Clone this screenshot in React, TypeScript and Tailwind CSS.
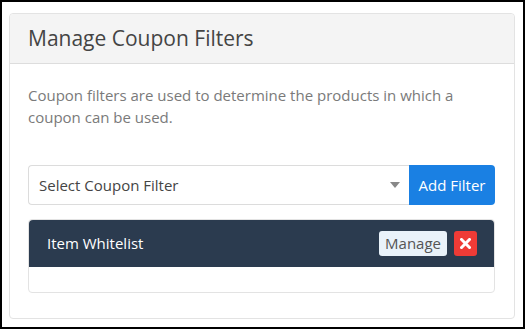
import { useState } from "react";

const filters = ["Item Whitelist"];

export default function App() {
  const [selected, setSelected] = useState("");

  return (
    <div
      className="w-[525px] h-[329px] border-2 border-black bg-white pt-[11px] pl-[7px] pr-[8px]"
      style={{ fontFamily: '"Open Sans", "Noto Sans", sans-serif' }}
    >
      <div className="h-[306px] rounded border border-[#e3e3e3] flex flex-col">
        <div className="h-[50px] bg-[#f4f4f4] border-b border-[#dddddd] rounded-t flex items-center px-[18px]">
          <h1 className="text-[21px] text-[#444444] leading-none">Manage Coupon Filters</h1>
        </div>

        <div className="pl-[18px] pr-[19px] pt-[20px]">
          <p className="text-[15px] leading-[22px] text-[#7a7a7a]">
            Coupon filters are used to determine the products in which a coupon can be used.
          </p>

          <div className="flex mt-[37px] h-[40px]">
            <div className="relative flex-1">
              <select
                value={selected}
                onChange={(e) => setSelected(e.target.value)}
                className="appearance-none w-full h-full border border-[#dcdcdc] border-r-0 rounded-l pl-[10px] text-[15px] text-[#444444] bg-white outline-none"
              >
                <option value="">Select Coupon Filter</option>
                <option value="whitelist">Item Whitelist</option>
                <option value="blacklist">Item Blacklist</option>
              </select>
              <span className="pointer-events-none absolute right-[9px] top-[17px] w-0 h-0 border-l-[5px] border-r-[5px] border-t-[6px] border-l-transparent border-r-transparent border-t-[#888888]" />
            </div>
            <button className="w-[86px] bg-[#1a80e3] text-white text-[15px] rounded-r">Add Filter</button>
          </div>

          <div className="mt-[14px] flex flex-col gap-3">
            {filters.map((f) => (
              <div key={f} className="rounded border border-[#e3e3e3]">
                <div className="h-[47px] bg-[#2b3b4f] rounded-t flex items-center justify-between pl-[18px] pr-[17px]">
                  <span className="text-[15px] text-white">{f}</span>
                  <div className="flex items-center gap-[7px]">
                    <button className="h-[25px] px-[6px] rounded-[3px] bg-[#e9f2fa] text-[#555555] text-[15px] leading-none">
                      Manage
                    </button>
                    <button className="w-[23px] h-[25px] rounded-[3px] bg-[#ef3b36] flex items-center justify-center">
                      <svg width="11" height="11" viewBox="0 0 11 11">
                        <path d="M1.5 1.5 L9.5 9.5 M9.5 1.5 L1.5 9.5" stroke="white" strokeWidth="3" strokeLinecap="square" />
                      </svg>
                    </button>
                  </div>
                </div>
                <div className="h-[25px]" />
              </div>
            ))}
          </div>
        </div>
      </div>
    </div>
  );
}
